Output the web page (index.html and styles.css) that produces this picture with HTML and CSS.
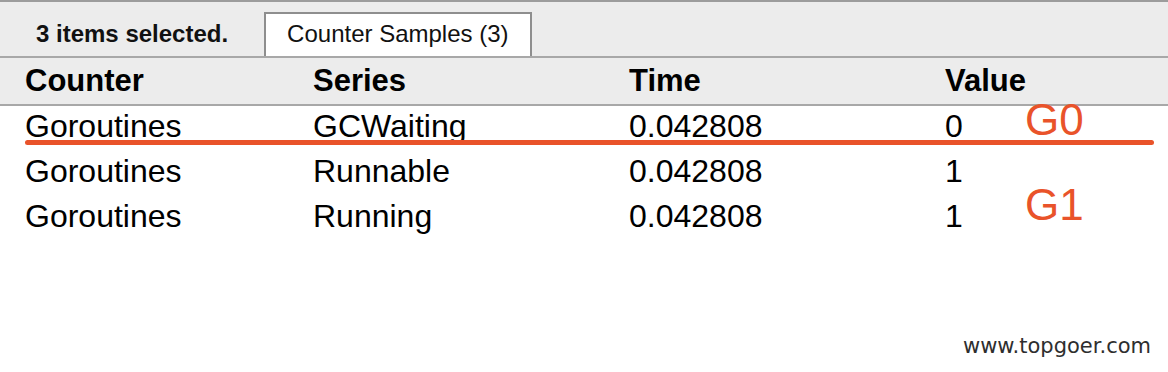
FILE: index.html
```html
<!DOCTYPE html>
<html>
<head>
<meta charset="utf-8">
<link rel="stylesheet" href="styles.css">
</head>
<body>
<div class="page">
  <div class="tabbar">
    <div class="selected-label">3 items selected.</div>
    <div class="tab">Counter Samples (3)</div>
  </div>
  <div class="table">
    <div class="row head">
      <div>Counter</div><div>Series</div><div>Time</div><div>Value</div>
    </div>
    <div class="body">
      <div class="row">
        <div>Goroutines</div><div>GCWaiting</div><div>0.042808</div><div>0</div>
      </div>
      <div class="row">
        <div>Goroutines</div><div>Runnable</div><div>0.042808</div><div>1</div>
      </div>
      <div class="row">
        <div>Goroutines</div><div>Running</div><div>0.042808</div><div>1</div>
      </div>
    </div>
    <div class="mark-line"></div>
    <div class="mark g0">G0</div>
    <div class="mark g1">G1</div>
  </div>
  <div class="watermark">www.topgoer.com</div>
</div>
</body>
</html>
```
FILE: styles.css
```css
html, body {
  margin: 0;
  padding: 0;
  background: #ffffff;
}
.page {
  position: relative;
  width: 1168px;
  height: 372px;
  overflow: hidden;
  font-family: "Liberation Sans", Arial, sans-serif;
  color: #000;
}
.tabbar {
  display: flex;
  align-items: flex-end;
  height: 54px;
  background: #ececec;
  border-top: 2px solid #9c9c9c;
  border-bottom: 2px solid #a8a8a8;
}
.selected-label {
  padding: 0 36px;
  font-size: 24px;
  font-weight: bold;
  line-height: 40px;
  padding-bottom: 2px;
  color: #111;
}
.tab {
  background: #fff;
  border: 2px solid #8e8e8e;
  border-bottom: none;
  padding: 0 21px 2px 21px;
  font-size: 24px;
  line-height: 40px;
  color: #111;
}
.table {
  position: relative;
}
.row {
  display: grid;
  grid-template-columns: 288px 316px 316px 1fr;
  padding-left: 25px;
}
.head {
  background: #ececec;
  border-bottom: 2px solid #a8a8a8;
  font-size: 31px;
  font-weight: bold;
  line-height: 46px;
  height: 46px;
}
.body .row {
  font-size: 32px;
  line-height: 40px;
  padding-bottom: 5px;
}
.mark-line {
  position: absolute;
  left: 25px;
  top: 82px;
  width: 1129px;
  height: 5px;
  border-radius: 3px;
  background: #e9532a;
}
.mark {
  position: absolute;
  font-size: 44px;
  line-height: 1;
  color: #e9532a;
  left: 1025px;
}
.g0 { top: 40px; }
.g1 { top: 125px; }
.watermark {
  position: absolute;
  left: 963px;
  top: 334px;
  font-family: "DejaVu Sans", sans-serif;
  font-size: 21px;
  line-height: 24px;
  color: #2e2e2e;
}
```
